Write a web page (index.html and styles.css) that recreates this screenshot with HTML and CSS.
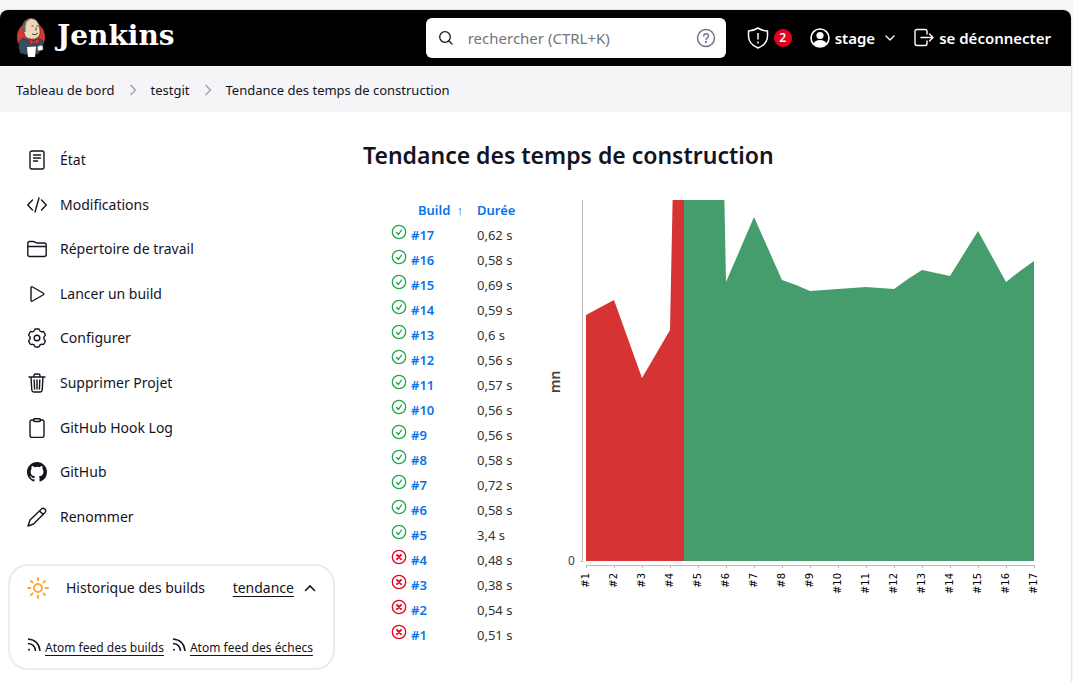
FILE: index.html
```html
<!DOCTYPE html>
<html lang="fr">
<head>
<meta charset="utf-8">
<title>Tendance des temps de construction - Jenkins</title>
<link rel="stylesheet" href="styles.css">
</head>
<body>
<div class="page">
<header class="header">
  <a class="brand" href="#">
    <svg class="brand-logo" viewBox="0 0 30 40" aria-hidden="true">
      <ellipse cx="15" cy="19" rx="14" ry="15" fill="#d33833"/>
      <path d="M3 24 7 20 14 23 24 21 27 23 27 30 22 36 12 37 4 35Q2 29 3 24z" fill="#335061" stroke="#1a2a33" stroke-width=".6"/>
      <path d="M9 18 7 12Q6 4 11 1.500Q16-1 20 2Q24 6 24 12Q25 19 19 21Q12 22 9 18z" fill="#f0d6b7" stroke="#333" stroke-width=".7"/>
      <path d="M8 14Q5 10 7 6Q9 1 14 1L10.500 4 9.500 8 9.500 14z" fill="#686663"/>
      <path d="M15.500 8h2M20.500 8h2M20 9.500v3M16 16q3 2 6-1" fill="none" stroke="#333" stroke-width=".9"/>
      <path d="M13 21 18 23 23 20.500 23 26 18 24.500 14 27z" fill="#d33833" stroke="#811" stroke-width=".5"/>
      <path d="M11 29 20 28.500 19 39 12 39z" fill="#fff"/>
      <path d="M21 29Q24 26 27 28L27 32 22 33z" fill="#fff" stroke="#333" stroke-width=".5"/>
    </svg>
    <span class="brand-name">Jenkins</span>
  </a>
  <form class="search" role="search">
    <svg class="search-icon" viewBox="0 0 16 16" fill="none" stroke="currentColor" stroke-width="1.3" stroke-linecap="round" aria-hidden="true"><circle cx="7" cy="7" r="5.300"/><path d="m11 11 3 3"/></svg>
    <input class="search-input" type="search" placeholder="rechercher (CTRL+K)" aria-label="rechercher">
    <a class="search-help" href="#" aria-label="Aide">
      <svg viewBox="0 0 20 20" fill="none" stroke="currentColor" stroke-width="1.500" stroke-linecap="round"><circle cx="10" cy="10" r="8.500"/><path d="M7.700 8q0-2.300 2.400-2.300T12.500 8q0 1-1.300 1.800-1.200.7-1.200 1.700"/><circle cx="10" cy="14" r=".4"/></svg>
    </a>
  </form>
  <nav class="account" aria-label="Compte">
    <a class="alerts" href="#" aria-label="2 alertes de sécurité">
      <svg class="icon-lg" viewBox="0 0 22 22" fill="none" stroke="currentColor" stroke-width="1.500" stroke-linejoin="round"><path d="M11 1Q6 4 1.500 4V9Q1.500 17 11 21Q20.500 17 20.500 9V4Q16 4 11 1zM11 6v6.500M11 14.500v2"/></svg>
      <span class="badge">2</span>
    </a>
    <a class="user" href="#">
      <svg class="icon-md" viewBox="0 0 20 20" aria-hidden="true"><circle cx="10" cy="10" r="9" fill="none" stroke="currentColor" stroke-width="1.600"/><circle cx="10" cy="7.500" r="3.600" fill="currentColor"/><path d="M3.500 15.500Q5 12 10 12T16.500 15.500Q14 18.500 10 18.500T3.500 15.500z" fill="currentColor"/></svg>
      <span>stage</span>
      <svg class="chevron" viewBox="0 0 12 12" fill="none" stroke="currentColor" stroke-width="1.300" stroke-linecap="round" stroke-linejoin="round" aria-hidden="true"><path d="m2 4 4 4 4-4"/></svg>
    </a>
    <a class="logout" href="#">
      <svg class="icon-md" viewBox="0 0 20 20" fill="none" stroke="currentColor" stroke-width="1.400" stroke-linecap="round" stroke-linejoin="round" aria-hidden="true"><path d="M13 6V3.500Q13 1.500 11 1.500H3Q1 1.500 1 3.500v12Q1 17.500 3 17.500h8q2 0 2-2V13M7 9.500h12M15.500 6 19 9.500 15.500 13"/></svg>
      <span>se déconnecter</span>
    </a>
  </nav>
</header>
<nav class="breadcrumbs" aria-label="Fil d'Ariane">
  <a href="#">Tableau de bord</a>
  <svg class="crumb-sep" viewBox="0 0 12 12" aria-hidden="true"><path d="m3.500 1 5 5-5 5"/></svg>
  <a href="#">testgit</a>
  <svg class="crumb-sep" viewBox="0 0 12 12" aria-hidden="true"><path d="m3.500 1 5 5-5 5"/></svg>
  <a href="#">Tendance des temps de construction</a>
</nav>
<div class="body">
<aside class="side">
  <nav class="tasks" aria-label="Tâches">
    <a class="task" href="#"><svg viewBox="0 0 20 20"><rect x="3" y="1" width="14" height="18" rx="2"/><path d="M6.500 5h7M6.500 8h7M6.500 11h4"/></svg>État</a>
    <a class="task" href="#"><svg viewBox="0 0 20 20"><path d="M5.500 5 .7 10l4.800 5M14.500 5l4.800 5-4.800 5M12 3 8 17"/></svg>Modifications</a>
    <a class="task" href="#"><svg viewBox="0 0 20 20"><path d="M.8 15.500V4.500q0-2 2-2h3q1.500 0 2.500.8.800.7 2 .7h6.900q2 0 2 2v9.500q0 2-2 2H2.800q-2 0-2-2zM.8 7.500h18.400"/></svg>Répertoire de travail</a>
    <a class="task" href="#"><svg viewBox="0 0 20 20"><path d="M4 4v12q0 2 1.600 1l10.400-6q1.600-1 0-2L5.600 3Q4 2 4 4z"/></svg>Lancer un build</a>
    <a class="task" href="#"><svg viewBox="0 0 20 20"><circle cx="10" cy="10" r="2.800"/><path d="M8.600 1h2.800q.8 0 1 .9.400 1.600 1.900 1.800.6.100 1.200-.1.900-.3 1.300.4l1.400 2.400q.4.700-.3 1.300-1.100 1-1.100 2.300t1.100 2.300q.7.600.3 1.300l-1.400 2.400q-.4.700-1.300.4-.6-.2-1.200-.1-1.500.2-1.900 1.800-.2.900-1 .9H8.600q-.8 0-1-.9-.4-1.600-1.900-1.800-.6-.1-1.200.1-.9.300-1.300-.4L1.800 13.600q-.4-.7.300-1.300 1.100-1 1.100-2.300T2.100 7.700q-.7-.6-.3-1.300L3.200 4q.4-.7 1.300-.4.600.2 1.200.1 1.500-.2 1.900-1.800.2-.9 1-.9z"/></svg>Configurer</a>
    <a class="task" href="#"><svg viewBox="0 0 20 20"><path d="M2 4h16M4 4l.8 13q.2 2 2 2h6.400q1.800 0 2-2L16 4M7 4V2.500Q7 1 8.500 1h3Q13 1 13 2.500V4M7.200 7l.4 9M10 7v9M12.800 7l-.4 9"/></svg>Supprimer Projet</a>
    <a class="task" href="#"><svg viewBox="0 0 20 20"><path d="M7 2H5Q3 2 3 4v13.500q0 2 2 2h10q2 0 2-2V4q0-2-2-2h-2"/><rect x="6.500" y=".7" width="7" height="2.800" rx="1.200"/></svg>GitHub Hook Log</a>
    <a class="task" href="#"><svg class="solid" viewBox="0 0 16 16"><path d="M8 0C3.580 0 0 3.580 0 8c0 3.540 2.290 6.530 5.470 7.590.4.070.55-.17.55-.38 0-.19-.01-.82-.01-1.490-2.010.37-2.530-.49-2.690-.94-.09-.23-.48-.94-.82-1.130-.28-.15-.68-.52-.01-.53.63-.01 1.080.58 1.230.82.72 1.210 1.870.87 2.330.66.07-.52.28-.87.51-1.070-1.780-.2-3.640-.89-3.640-3.950 0-.87.31-1.590.82-2.150-.08-.2-.36-1.020.08-2.120 0 0 .67-.21 2.200.82a7.600 7.600 0 0 1 4 0c1.530-1.040 2.200-.82 2.200-.82.44 1.100.16 1.920.08 2.120.51.56.82 1.270.82 2.150 0 3.070-1.870 3.750-3.650 3.950.29.25.54.73.54 1.480 0 1.070-.01 1.930-.01 2.200 0 .21.15.46.55.38A8 8 0 0 0 16 8c0-4.420-3.580-8-8-8z"/></svg>GitHub</a>
    <a class="task" href="#"><svg viewBox="0 0 20 20"><path d="M1 19 3 13 14.500 2q1.500-1.500 3.300 0 1.800 1.800.2 3.500L6.500 17zM12.500 4l3.700 3.600"/></svg>Renommer</a>
  </nav>
  <section class="history">
    <div class="history-head">
      <svg class="sun" viewBox="0 0 22 22" fill="none" stroke="currentColor" stroke-width="1.900" stroke-linecap="round" aria-hidden="true"><circle cx="11" cy="11" r="4"/><path d="M11 1v2.500M11 18.500V21M1 11h2.500M18.500 11H21M4 4l1.700 1.700M16.300 16.300 18 18M4 18l1.700-1.700M16.300 5.700 18 4"/></svg>
      <span class="history-title">Historique des builds</span>
      <a class="under" href="#">tendance</a>
      <button class="toggle" type="button" aria-label="Replier"><svg viewBox="0 0 12 12"><path d="M1.500 8.500 6 4l4.500 4.500"/></svg></button>
    </div>
    <div class="feeds">
      <a class="feed" href="#"><svg viewBox="0 0 14 14"><path d="M1 1q11 1 12 12M1 5.500q7 .5 7.500 7.500"/><circle cx="2" cy="11.800" r="1"/></svg><span class="under">Atom feed des builds</span></a>
      <a class="feed" href="#"><svg viewBox="0 0 14 14"><path d="M1 1q11 1 12 12M1 5.500q7 .5 7.500 7.500"/><circle cx="2" cy="11.800" r="1"/></svg><span class="under">Atom feed des échecs</span></a>
    </div>
  </section>
</aside>
<main class="main">
  <h1>Tendance des temps de construction</h1>
  <div class="trend">
    <table class="builds">
      <thead><tr><th></th><th class="col-build"><a href="#">Build <span class="arrow">↑</span></a></th><th><a href="#">Durée</a></th></tr></thead>
      <tbody id="rows"></tbody>
    </table>
    <svg class="chart" id="chart" viewBox="545 200 500 400" role="img" aria-label="Durée des builds en minutes">
      <path fill="#d63434" d="M586 561V315L614 300 642 378 670 330 672.600 200H684V561z"/>
      <path fill="#459d6d" d="M684 561V200H724.400L726 282 754 217 782 280 796 285 810 291 838 289 866 287 894 289 908 279 922 270 950 276 978 231 1006 282 1020 271 1034 261V561z"/>
      <path class="axis" d="M582.500 200V561.500M580 561.500H583M586 565.500H1035"/>
      <text class="unit" transform="translate(560 393) rotate(-90)">mn</text>
      <text class="zero" x="568" y="565">0</text>
    </svg>
  </div>
</main>
</div>
</div>
<script src="script.js"></script>
</body>
</html>
```
FILE: styles.css
```css
* { box-sizing: border-box; }
body {
  margin: 0;
  padding: 10px 2px 0 0;
  background: #f6f6f6;
  color: #14141f;
  font: 400 14px/20px "Noto Sans", "Open Sans", sans-serif;
}
a { color: inherit; text-decoration: none; }
svg { display: block; flex: none; }
.page { background: #fff; border-radius: 8px 8px 0 0; min-height: calc(100vh - 10px); box-shadow: 0 0 2px #bbb; }
.header {
  display: flex;
  align-items: center;
  height: 56px;
  padding: 0 20px 0 16px;
  background: #000;
  color: #fff;
  border-radius: 8px 8px 0 0;
}
.brand { display: flex; align-items: center; gap: 11px; margin-right: auto; }
.brand-logo { width: 30px; height: 40px; }
.brand-name { font: 700 28px/36px "DejaVu Serif", serif; padding-bottom: 4px; }
.search {
  display: flex;
  align-items: center;
  gap: 14px;
  width: 300px;
  height: 40px;
  padding: 0 10px 0 12px;
  background: #fff;
  border-radius: 6px;
  color: #14141f;
}
.search-icon { width: 16px; height: 16px; }
.search-input { flex: 1; min-width: 0; border: 0; padding: 0; background: none; font: 400 15px/20px "Noto Sans", sans-serif; outline: 0; }
.search-input::placeholder { color: #757575; opacity: 1; }
.search-help { color: #73738c; }
.search-help svg { width: 20px; height: 20px; }
.account { display: flex; align-items: center; gap: 18px; margin-left: 21px; font-weight: 600; font-size: 15px; }
.alerts, .user, .logout { display: flex; align-items: center; gap: 5px; }
.icon-lg { width: 22px; height: 22px; }
.icon-md { width: 20px; height: 20px; }
.badge { width: 18px; height: 18px; border-radius: 50%; background: #e6001f; font-size: 12px; line-height: 18px; text-align: center; }
.chevron { width: 12px; height: 12px; margin-left: 4px; }
.breadcrumbs { display: flex; align-items: center; gap: 12px; height: 46px; padding: 2px 16px 0; background: #f5f5f8; font-size: 13px; }
.crumb-sep { width: 12px; height: 12px; fill: none; stroke: #a3a3b8; stroke-width: 1.5; }
.body { display: grid; grid-template-columns: 327px minmax(0, 1fr); gap: 28px; padding: 26px 26px 12px 8px; }
.tasks { display: grid; grid-auto-rows: 1fr; min-height: 401px; }
.task { display: flex; align-items: center; gap: 13px; padding-left: 19px; }
.task svg { width: 20px; height: 20px; fill: none; stroke: currentColor; stroke-width: 1.4; stroke-linecap: round; stroke-linejoin: round; }
.task .solid { fill: currentColor; stroke: none; }
.history { margin-top: 25px; padding: 11px 17px 10px; border: 2px solid #ebebf2; border-radius: 20px; }
.history-head { display: flex; align-items: center; }
.sun { width: 22px; height: 22px; margin-right: 17px; color: #fea82f; }
.history-title { margin-right: auto; }
.under { text-decoration: underline; text-underline-offset: 3px; }
.toggle { margin-left: 10px; padding: 0; border: 0; background: none; color: inherit; }
.toggle svg { width: 12px; height: 12px; fill: none; stroke: currentColor; stroke-width: 1.6; stroke-linecap: round; }
.feeds { display: flex; gap: 8px; margin-top: 39px; font-size: 12px; white-space: nowrap; }
.feed { display: flex; gap: 4px; }
.feed svg { width: 14px; height: 14px; fill: none; stroke: currentColor; stroke-width: 1.5; }
.feed circle { fill: currentColor; stroke: none; }
h1 { margin: 5px 0 32px; font: 600 23px/25px "Noto Sans", sans-serif; }
.trend { display: flex; align-items: flex-start; gap: 26px; padding-left: 28px; }
.builds { border-collapse: collapse; width: 128px; flex: none; margin-top: -3px; }
.builds th, .builds td { padding: 0; height: 25px; text-align: left; font-size: 13px; line-height: 20px; white-space: nowrap; }
.builds th { font-weight: 600; }
.builds a { color: #0b73ea; font-weight: 600; }
.builds td { font-weight: 400; color: #333; }
.builds td:first-child, .builds th:first-child { width: 20px; }
.builds .col-build { width: 66px; padding-left: 7px; }
.arrow { font-weight: 400; margin-left: 3px; }
.status { width: 16px; height: 16px; margin-bottom: 5px; fill: none; stroke: currentColor; stroke-width: 1.3; stroke-linecap: round; stroke-linejoin: round; }
.ok { color: #1ea64b; }
.fail { color: #e6001f; }
.chart { flex: 0 1 500px; min-width: 0; height: auto; }
.axis { fill: none; stroke: #b9b9b9; }
.label { font: 10px "DejaVu Sans", sans-serif; fill: #000; }
.unit { font: 600 14px "Noto Sans", sans-serif; fill: #444; }
.zero { font: 12px "Noto Sans", sans-serif; fill: #444; }
```
FILE: script.js
```js
const durations = ["0,51", "0,54", "0,38", "0,48", "3,4", "0,58", "0,72", "0,58", "0,56", "0,56", "0,57", "0,56", "0,6", "0,59", "0,69", "0,58", "0,62"];
const rows = document.getElementById("rows");
const chart = document.getElementById("chart");
durations.forEach((duration, i) => {
  const number = i + 1;
  const failed = number < 5;
  const mark = failed ? '<path stroke-width="1.8" d="m6 6 4 4M10 6l-4 4"/>' : '<path d="m5.500 8.500 2 2 3-4.500"/>';
  rows.insertAdjacentHTML("afterbegin",
    `<tr><td><svg class="status ${failed ? "fail" : "ok"}" viewBox="0 0 16 16" role="img" aria-label="${failed ? "Échec" : "Succès"}"><circle cx="8" cy="8" r="6.700"/>${mark}</svg></td><td><a href="#">#${number}</a></td><td>${duration} s</td></tr>`);
  const x = 586 + i * 28;
  chart.insertAdjacentHTML("beforeend",
    `<path class="axis" d="M${x + 0.5} 565v3"/><text class="label" text-anchor="end" transform="translate(${x + 3} 573) rotate(-90)">#${number}</text>`);
});
```
